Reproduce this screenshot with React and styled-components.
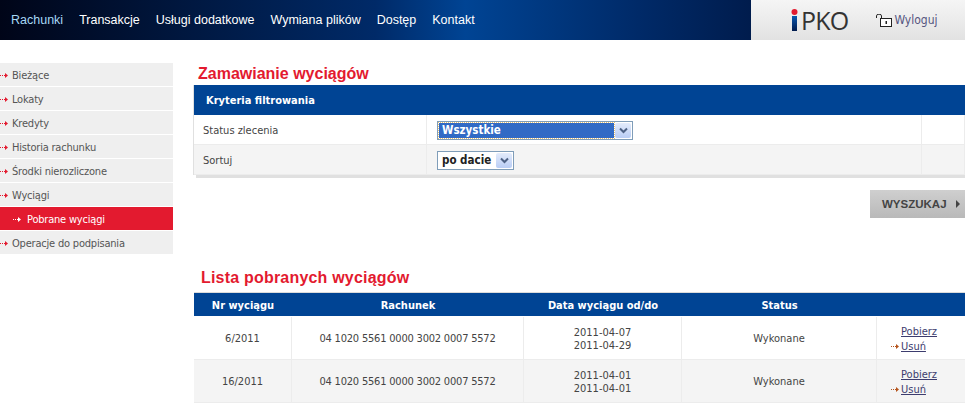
import React from 'react';
import styled, { createGlobalStyle } from 'styled-components';

const GlobalStyle = createGlobalStyle`
  html, body {
    margin: 0;
    padding: 0;
    background: #fff;
  }
  body {
    width: 965px;
    height: 404px;
    overflow: hidden;
    font-family: "DejaVu Sans Condensed", "DejaVu Sans", sans-serif;
    font-size: 11px;
    color: #444;
  }
`;

const Header = styled.header`
  display: flex;
  height: 40px;
`;
const MainNav = styled.nav`
  width: 751px;
  display: flex;
  align-items: center;
  gap: 16px;
  padding-left: 11px;
  box-sizing: border-box;
  background: linear-gradient(90deg, #000518 0%, #002a68 50%, #004494 62%, #002a68 85%, #001c4d 100%);
`;
const NavLink = styled.a`
  font-family: "Liberation Sans", Arial, sans-serif;
  font-size: 12.5px;
  color: ${(p) => (p.$active ? '#a6d8f5' : '#fff')};
`;
const Brand = styled.div`
  flex: 1;
  display: flex;
  align-items: center;
  background: linear-gradient(180deg, #f5f5f5, #e2e2e2);
`;
const LogoWrap = styled.div`
  display: flex;
  align-items: center;
  margin-left: 40px;
  height: 40px;
`;
const LogoText = styled.span`
  font-family: "Open Sans", sans-serif;
  font-size: 25px;
  color: #333;
  letter-spacing: -0.8px;
  margin-left: 3px;
`;
const Logout = styled.a`
  display: flex;
  align-items: center;
  gap: 2px;
  margin-left: 28px;
  font-size: 12px;
  color: #555580;
`;

const Body = styled.div`
  display: flex;
  align-items: flex-start;
`;
const Sidebar = styled.aside`
  width: 173px;
  margin-top: 23px;
  display: flex;
  flex-direction: column;
  gap: 1px;
`;
const SideItem = styled.a`
  display: flex;
  align-items: center;
  gap: ${(p) => (p.$active ? '5px' : '3px')};
  height: 23px;
  box-sizing: border-box;
  padding: 1px 0 0 ${(p) => (p.$active ? '12px' : '0')};
  background: ${(p) => (p.$active ? '#e31a2f' : '#efefef')};
  color: ${(p) => (p.$active ? '#fff' : '#555')};
  font-size: 11px;
  letter-spacing: -0.2px;
  overflow: hidden;
`;
const Main = styled.main`
  width: 772px;
  margin-left: 20px;
`;
const Title = styled.h1`
  margin: ${(p) => p.$margin};
  font-family: "Liberation Sans", Arial, sans-serif;
  font-size: 16px;
  line-height: 20px;
  font-weight: bold;
  letter-spacing: ${(p) => p.$spacing || 0}px;
  color: #e31a2f;
`;
const Panel = styled.section`
  border-left: 1px solid #e0e0e0;
  box-shadow: 3px 3px 0 #e0e0e0;
`;
const PanelHead = styled.div`
  height: 30px;
  display: flex;
  align-items: center;
  padding-left: 12px;
  background: #004494;
  color: #fff;
  font-size: 11px;
  font-weight: 700;
`;
const FilterRow = styled.div`
  display: grid;
  grid-template-columns: 233px 495px 1fr;
  height: 30px;
  background: ${(p) => (p.$shaded ? '#f4f4f4' : '#fff')};
  border-bottom: 1px solid #ececec;
  box-sizing: border-box;
`;
const FilterCell = styled.div`
  display: flex;
  align-items: center;
  padding: 1px 0 0 ${(p) => p.$pad || 0}px;
  border-right: 1px solid #ececec;
  font-size: 11px;
`;
const SelectBox = styled.div`
  width: ${(p) => p.$width}px;
  height: 19px;
  box-sizing: border-box;
  display: flex;
  align-items: center;
  justify-content: space-between;
  border: 1px solid #7f9db9;
  padding: 1px;
  background: #fff;
`;
const SelectValue = styled.span`
  flex: 1;
  height: 15px;
  line-height: 14px;
  padding-left: 3px;
  font-size: 11.5px;
  font-weight: 700;
  background: ${(p) => (p.$focused ? '#316ac5' : 'transparent')};
  color: ${(p) => (p.$focused ? '#fff' : '#222')};
  outline: ${(p) => (p.$focused ? '1px dotted #e8c070' : 'none')};
`;
const SelectArrow = styled.span`
  width: 16px;
  height: 15px;
  flex: none;
  display: flex;
  align-items: center;
  justify-content: center;
  margin-left: 1px;
  border-radius: 2px;
  background: linear-gradient(180deg, #e3ebfb, #b9cdf5);
`;
const Actions = styled.div`
  display: flex;
  justify-content: flex-end;
  margin-top: 15px;
`;
const SearchButton = styled.button`
  width: 95px;
  height: 28px;
  display: flex;
  align-items: center;
  gap: 9px;
  padding: 0 0 0 12px;
  border: 0;
  background: linear-gradient(180deg, #cfcfcf, #b9b9b9);
  font-family: "Liberation Sans", Arial, sans-serif;
  font-size: 11.5px;
  font-weight: bold;
  color: #444;
`;
const Caret = styled.span`
  width: 0;
  height: 0;
  border-left: 4px solid #444;
  border-top: 4px solid transparent;
  border-bottom: 4px solid transparent;
`;
const Table = styled.section`
  border-top: 1px solid #dcdcdc;
  margin-left: 1px;
`;
const columns = '98px 232px 158px 195px 1fr';
const HeadRow = styled.div`
  display: grid;
  grid-template-columns: ${columns};
  height: 23px;
  box-sizing: border-box;
  padding-top: 1px;
  margin-bottom: 1px;
  align-items: center;
  background: #004494;
  color: #fff;
  font-size: 11px;
  font-weight: 700;
  text-align: center;
`;
const DataRow = styled.div`
  display: grid;
  grid-template-columns: ${columns};
  height: 43px;
  box-sizing: border-box;
  border-bottom: 1px solid #ececec;
  background: ${(p) => (p.$shaded ? '#f4f4f4' : '#fff')};
`;
const Cell = styled.div`
  display: flex;
  flex-direction: column;
  align-items: center;
  justify-content: center;
  line-height: 13px;
  font-size: 11px;
  border-right: 1px solid #ececec;
`;
const AccountCell = styled(Cell)`
  letter-spacing: -0.2px;
`;
const DateCell = styled(Cell)`
  padding-top: 2px;
  box-sizing: border-box;
`;
const LinkCell = styled.div`
  display: flex;
  flex-direction: column;
  justify-content: center;
  gap: 2px;
  padding: 2px 0 0 24px;
  box-sizing: border-box;
  font-size: 11px;
  line-height: 13px;
`;
const RowLink = styled.a`
  position: relative;
  color: #3c3c6e;
  text-decoration: underline;
`;
const LinkArrow = styled.span`
  position: absolute;
  left: -11px;
  top: 3px;
  display: flex;
`;
const ArrowGlyph = styled.svg`
  flex: none;
  margin-left: ${(p) => p.$inset || 0}px;
`;

function DottedArrow({ color, inset }) {
  return (
    <ArrowGlyph $inset={inset} width="10" height="7" viewBox="0 0 10 7">
      <path d="M1 3.500h1M3 3.500h1M5 3.500h1" stroke={color} strokeWidth="1" fill="none" />
      <path d="M6 1l3 2.500-3 2.500z" fill={color} />
    </ArrowGlyph>
  );
}

function ChevronDown() {
  return (
    <svg width="9" height="7" viewBox="0 0 9 7">
      <path d="M1 1.500l3.500 3.500 3.500-3.500" stroke="#4d6185" strokeWidth="2" fill="none" />
    </svg>
  );
}

function PadlockOpen() {
  return (
    <svg width="16" height="13" viewBox="0 0 16 13">
      <rect x="4.500" y="4.500" width="11" height="8" fill="#fff" stroke="#222" />
      <path d="M0.500 4V2a2 1.500 0 0 1 5 0v2.500" fill="none" stroke="#222" />
      <rect x="9.500" y="7" width="1.500" height="3" fill="#222" />
    </svg>
  );
}

function LogoMark() {
  return (
    <svg width="7" height="22" viewBox="0 0 7 22">
      <defs>
        <linearGradient id="ipkoStem" x1="0" y1="0" x2="0" y2="1">
          <stop offset="0" stopColor="#0a58b0" />
          <stop offset="1" stopColor="#001a4d" />
        </linearGradient>
      </defs>
      <circle cx="3.500" cy="3" r="3" fill="#e31a2f" />
      <rect x="1" y="7" width="5" height="15" fill="url(#ipkoStem)" />
    </svg>
  );
}

const navItems = ['Rachunki', 'Transakcje', 'Usługi dodatkowe', 'Wymiana plików', 'Dostęp', 'Kontakt'];
const sideItems = ['Bieżące', 'Lokaty', 'Kredyty', 'Historia rachunku', 'Środki nierozliczone', 'Wyciągi'];
const rows = [
  { nr: '6/2011', from: '2011-04-07', to: '2011-04-29' },
  { nr: '16/2011', from: '2011-04-01', to: '2011-04-01' },
];

function SideLink({ label, active }) {
  return (
    <SideItem $active={active}>
      <DottedArrow color={active ? '#fff' : '#e31a2f'} inset={active ? 0 : -1} />
      <span>{label}</span>
    </SideItem>
  );
}

export default function App() {
  return (
    <>
      <GlobalStyle />
      <Header>
        <MainNav>
          {navItems.map((item, index) => (
            <NavLink key={item} $active={index === 0}>{item}</NavLink>
          ))}
        </MainNav>
        <Brand>
          <LogoWrap>
            <LogoMark />
            <LogoText>PKO</LogoText>
          </LogoWrap>
          <Logout>
            <PadlockOpen />
            Wyloguj
          </Logout>
        </Brand>
      </Header>
      <Body>
        <Sidebar>
          {sideItems.map((item) => (
            <SideLink key={item} label={item} />
          ))}
          <SideLink label="Pobrane wyciągi" active />
          <SideLink label="Operacje do podpisania" />
        </Sidebar>
        <Main>
          <Title $margin="24px 0 1px 5px">Zamawianie wyciągów</Title>
          <Panel>
            <PanelHead>Kryteria filtrowania</PanelHead>
            <FilterRow>
              <FilterCell $pad={9}>Status zlecenia</FilterCell>
              <FilterCell $pad={10}>
                <SelectBox $width={196}>
                  <SelectValue $focused>Wszystkie</SelectValue>
                  <SelectArrow><ChevronDown /></SelectArrow>
                </SelectBox>
              </FilterCell>
              <FilterCell />
            </FilterRow>
            <FilterRow $shaded>
              <FilterCell $pad={9}>Sortuj</FilterCell>
              <FilterCell $pad={10}>
                <SelectBox $width={77}>
                  <SelectValue>po dacie</SelectValue>
                  <SelectArrow><ChevronDown /></SelectArrow>
                </SelectBox>
              </FilterCell>
              <FilterCell />
            </FilterRow>
          </Panel>
          <Actions>
            <SearchButton>WYSZUKAJ <Caret /></SearchButton>
          </Actions>
          <Title $margin="50px 0 4px 8px" $spacing={0.2}>Lista pobranych wyciągów</Title>
          <Table>
            <HeadRow>
              <span>Nr wyciągu</span>
              <span>Rachunek</span>
              <span>Data wyciągu od/do</span>
              <span>Status</span>
              <span />
            </HeadRow>
            {rows.map((row, index) => (
              <DataRow key={row.nr} $shaded={index % 2 === 1}>
                <Cell>{row.nr}</Cell>
                <AccountCell>04 1020 5561 0000 3002 0007 5572</AccountCell>
                <DateCell>
                  <span>{row.from}</span>
                  <span>{row.to}</span>
                </DateCell>
                <Cell>Wykonane</Cell>
                <LinkCell>
                  <div><RowLink>Pobierz</RowLink></div>
                  <div>
                    <RowLink>
                      <LinkArrow><DottedArrow color="#b5541c" /></LinkArrow>
                      Usuń
                    </RowLink>
                  </div>
                </LinkCell>
              </DataRow>
            ))}
          </Table>
        </Main>
      </Body>
    </>
  );
}
